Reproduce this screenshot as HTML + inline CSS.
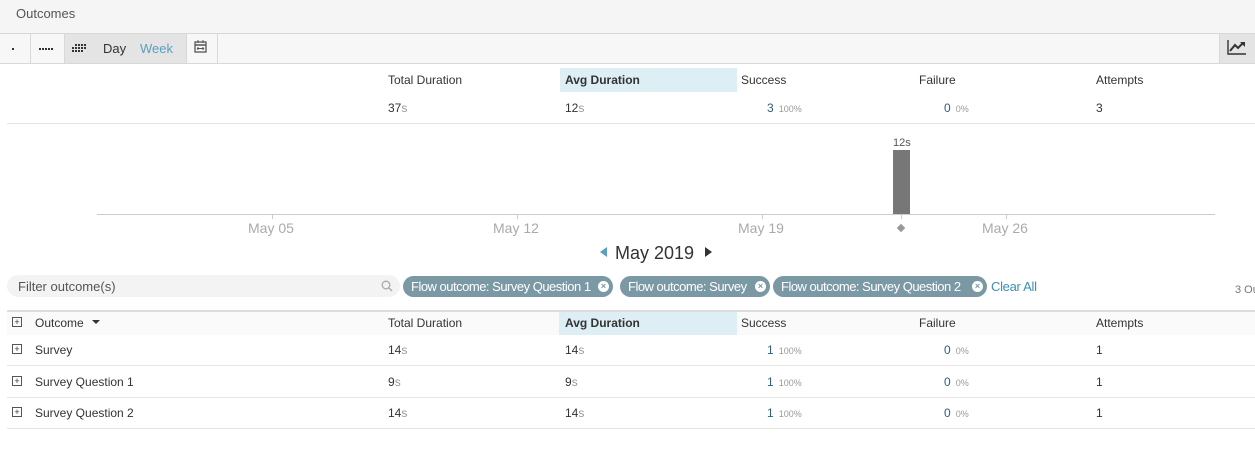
<html><head><style>
body{margin:0;width:1255px;height:456px;overflow:hidden;background:#fff;font-family:"Liberation Sans",sans-serif;font-size:12px;color:#333;position:relative}
.a{position:absolute;white-space:nowrap}
.s{color:#999}
.p{color:#999;font-size:9px;margin-left:5px}
.b{color:#2d5f7a}
.chip{position:absolute;top:276px;height:21px;border-radius:11px;background:#7b98a5;color:#fff;font-size:13px;line-height:21px;padding-left:8px;box-sizing:border-box;letter-spacing:-0.5px;white-space:nowrap}
.chip i{position:absolute;right:4px;top:5px;width:11px;height:11px;border-radius:50%;background:#fff;color:#7b98a5;font-style:normal;font-size:9px;line-height:11px;text-align:center;font-weight:bold;letter-spacing:0}
.pl{position:absolute;width:8px;height:8px;border:1px solid #555;font-size:9px;line-height:8px;text-align:center}
.tick{position:absolute;top:214px;width:1px;height:5px;background:#ccc}
.ml{position:absolute;top:220px;font-size:14px;color:#aaa}
</style></head><body>
<div class="a" style="left:0;top:0;width:1255px;height:33px;background:#f5f5f5"></div>
<div class="a" style="left:16px;top:6px;font-size:13px;color:#555">Outcomes</div>
<div class="a" style="left:0;top:33px;width:1255px;height:29px;background:#f7f7f7;border-top:1px solid #d8d8d8;border-bottom:1px solid #d8d8d8"></div>
<div class="a" style="left:30px;top:34px;width:1px;height:29px;background:#d8d8d8"></div>
<div class="a" style="left:64px;top:34px;width:121px;height:29px;background:#e4e4e4;border-left:1px solid #d8d8d8;border-right:1px solid #d8d8d8"></div>
<div class="a" style="left:217px;top:34px;width:1px;height:29px;background:#d8d8d8"></div>
<div class="a" style="left:1219px;top:34px;width:36px;height:29px;background:#e4e4e4;border-left:1px solid #d8d8d8"></div>
<svg class="a" style="left:0;top:34px" width="90" height="29">
<rect x="12" y="14" width="2" height="2" fill="#333"/>
<g fill="#333"><rect x="39" y="14" width="2" height="2"/><rect x="42" y="14" width="2" height="2"/><rect x="45" y="14" width="2" height="2"/><rect x="48" y="14" width="2" height="2"/><rect x="51" y="14" width="2" height="2"/></g>
<g fill="#333">
<rect x="75" y="10" width="2" height="2"/><rect x="78" y="10" width="2" height="2"/><rect x="81" y="10" width="2" height="2"/><rect x="84" y="10" width="2" height="2"/>
<rect x="72" y="13" width="2" height="2"/><rect x="75" y="13" width="2" height="2"/><rect x="78" y="13" width="2" height="2"/><rect x="81" y="13" width="2" height="2"/><rect x="84" y="13" width="2" height="2"/>
<rect x="72" y="16" width="2" height="2"/><rect x="75" y="16" width="2" height="2"/><rect x="78" y="16" width="2" height="2"/><rect x="81" y="16" width="2" height="2"/>
</g></svg>
<div class="a" style="left:103px;top:41px;font-size:13px">Day</div>
<div class="a" style="left:140px;top:41px;font-size:13px;color:#5a9ec0">Week</div>
<svg class="a" style="left:194px;top:40px" width="14" height="14"><rect x="1" y="2" width="11" height="10" fill="none" stroke="#555" stroke-width="1.3"/><line x1="1" y1="5" x2="12" y2="5" stroke="#555" stroke-width="1.5"/><line x1="4" y1="0" x2="4" y2="3" stroke="#555"/><line x1="9" y1="0" x2="9" y2="3" stroke="#555"/><path d="M3 8.5h7M3 8.5l1.5-1.3M3 8.5l1.5 1.3M10 8.5l-1.5-1.3M10 8.5l-1.5 1.3" stroke="#555" fill="none" stroke-width=".9"/></svg>
<svg class="a" style="left:1227px;top:39px" width="20" height="17"><path d="M1 1V15H19" stroke="#333" fill="none" stroke-width="1.4"/><path d="M3 12L8 6L11 9L16 4" stroke="#333" fill="none" stroke-width="2"/><path d="M13 3H18V8" fill="#333"/></svg>

<div class="a" style="left:560px;top:68px;width:177px;height:24px;background:#ddeef5"></div>
<div class="a" style="left:388px;top:73px">Total Duration</div>
<div class="a" style="left:565px;top:73px;font-weight:bold">Avg Duration</div>
<div class="a" style="left:741px;top:73px">Success</div>
<div class="a" style="left:919px;top:73px">Failure</div>
<div class="a" style="left:1096px;top:73px">Attempts</div>
<div class="a" style="left:388px;top:101px">37<span class="s">s</span></div>
<div class="a" style="left:565px;top:101px">12<span class="s">s</span></div>
<div class="a" style="left:767px;top:101px"><span class="b">3</span><span class="p">100%</span></div>
<div class="a" style="left:944px;top:101px"><span class="b">0</span><span class="p">0%</span></div>
<div class="a" style="left:1096px;top:101px">3</div>
<div class="a" style="left:7px;top:123px;width:1248px;height:1px;background:#e5e5e5"></div>

<div class="a" style="left:97px;top:214px;width:1118px;height:1px;background:#ccc"></div>
<div class="a" style="left:893px;top:150px;width:17px;height:64px;background:#777"></div>
<div class="a" style="left:893px;top:137px;font-size:11px;color:#555">12s</div>
<div class="tick" style="left:272px"></div><div class="tick" style="left:517px"></div><div class="tick" style="left:762px"></div><div class="tick" style="left:1006px"></div><div class="tick" style="left:901px"></div>
<div class="ml" style="left:248px">May 05</div><div class="ml" style="left:493px">May 12</div><div class="ml" style="left:738px">May 19</div><div class="ml" style="left:982px">May 26</div>
<div class="a" style="left:898px;top:225px;width:6px;height:6px;background:#999;transform:rotate(45deg)"></div>
<div class="a" style="left:600px;top:247px;width:0;height:0;border-top:5px solid transparent;border-bottom:5px solid transparent;border-right:7px solid #5a9ec0"></div>
<div class="a" style="left:615px;top:243px;font-size:18px">May 2019</div>
<div class="a" style="left:705px;top:247px;width:0;height:0;border-top:5px solid transparent;border-bottom:5px solid transparent;border-left:7px solid #333"></div>

<div class="a" style="left:7px;top:275px;width:393px;height:22px;background:#f3f3f3;border-radius:11px"></div>
<div class="a" style="left:18px;top:279px;font-size:13px;color:#555">Filter outcome(s)</div>
<svg class="a" style="left:381px;top:280px" width="12" height="12"><circle cx="5" cy="5" r="3.8" stroke="#aaa" fill="none" stroke-width="1.3"/><line x1="8" y1="8" x2="11" y2="11" stroke="#aaa" stroke-width="1.5"/></svg>
<div class="chip" style="left:403px;width:210px">Flow outcome: Survey Question 1<i>×</i></div>
<div class="chip" style="left:620px;width:150px">Flow outcome: Survey<i>×</i></div>
<div class="chip" style="left:773px;width:214px">Flow outcome: Survey Question 2<i>×</i></div>
<div class="a" style="left:991px;top:279px;font-size:13px;color:#3a8fb7;letter-spacing:-0.3px">Clear All</div>
<div class="a" style="left:1235px;top:284px;font-size:11px;color:#777">3 Ou</div>

<div class="a" style="left:7px;top:310px;width:1248px;height:2px;background:#ddd"></div>
<div class="a" style="left:7px;top:312px;width:1248px;height:23px;background:#fafafa"></div>
<div class="a" style="left:559px;top:312px;width:178px;height:23px;background:#ddeef5"></div>
<div class="pl" style="left:12px;top:317px">+</div>
<div class="a" style="left:35px;top:316px">Outcome</div>
<div class="a" style="left:92px;top:320px;width:0;height:0;border-left:4px solid transparent;border-right:4px solid transparent;border-top:4px solid #333"></div>
<div class="a" style="left:388px;top:316px">Total Duration</div>
<div class="a" style="left:565px;top:316px;font-weight:bold">Avg Duration</div>
<div class="a" style="left:741px;top:316px">Success</div>
<div class="a" style="left:919px;top:316px">Failure</div>
<div class="a" style="left:1096px;top:316px">Attempts</div>

<div class="pl" style="left:12px;top:344px">+</div>
<div class="a" style="left:35px;top:343px">Survey</div>
<div class="a" style="left:388px;top:343px">14<span class="s">s</span></div>
<div class="a" style="left:565px;top:343px">14<span class="s">s</span></div>
<div class="a" style="left:767px;top:343px"><span class="b">1</span><span class="p">100%</span></div>
<div class="a" style="left:944px;top:343px"><span class="b">0</span><span class="p">0%</span></div>
<div class="a" style="left:1096px;top:343px">1</div>
<div class="a" style="left:7px;top:365px;width:1248px;height:1px;background:#e5e5e5"></div>

<div class="pl" style="left:12px;top:376px">+</div>
<div class="a" style="left:35px;top:375px">Survey Question 1</div>
<div class="a" style="left:388px;top:375px">9<span class="s">s</span></div>
<div class="a" style="left:565px;top:375px">9<span class="s">s</span></div>
<div class="a" style="left:767px;top:375px"><span class="b">1</span><span class="p">100%</span></div>
<div class="a" style="left:944px;top:375px"><span class="b">0</span><span class="p">0%</span></div>
<div class="a" style="left:1096px;top:375px">1</div>
<div class="a" style="left:7px;top:397px;width:1248px;height:1px;background:#e5e5e5"></div>

<div class="pl" style="left:12px;top:407px">+</div>
<div class="a" style="left:35px;top:406px">Survey Question 2</div>
<div class="a" style="left:388px;top:406px">14<span class="s">s</span></div>
<div class="a" style="left:565px;top:406px">14<span class="s">s</span></div>
<div class="a" style="left:767px;top:406px"><span class="b">1</span><span class="p">100%</span></div>
<div class="a" style="left:944px;top:406px"><span class="b">0</span><span class="p">0%</span></div>
<div class="a" style="left:1096px;top:406px">1</div>
<div class="a" style="left:7px;top:428px;width:1248px;height:1px;background:#e5e5e5"></div>
</body></html>
